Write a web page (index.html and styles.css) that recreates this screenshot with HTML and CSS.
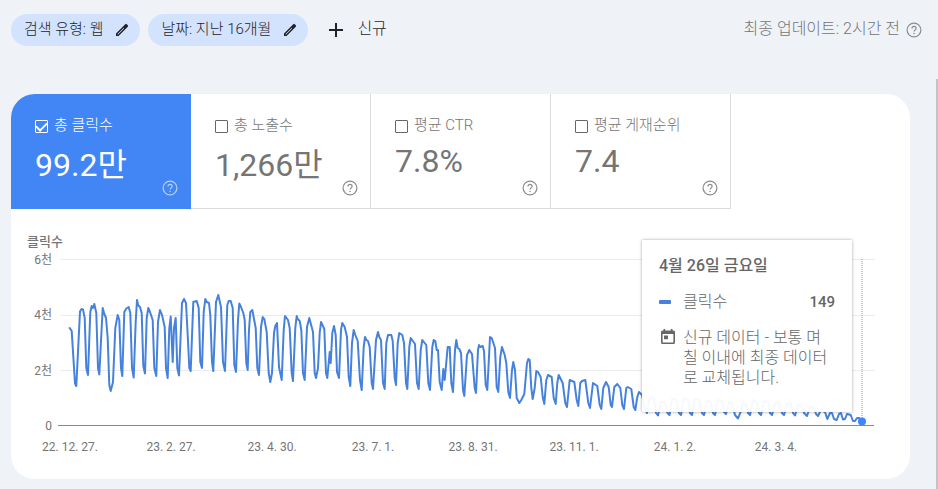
FILE: index.html
```html
<!DOCTYPE html>
<html lang="ko">
<head>
<meta charset="utf-8">
<meta name="viewport" content="width=device-width, initial-scale=1">
<title>실적</title>
<link rel="stylesheet" href="styles.css">
</head>
<body>
<svg class="defs" aria-hidden="true">
  <symbol id="pencil" viewBox="0 0 24 24"><path fill="currentColor" fill-rule="evenodd" d="M3 17.2V21h3.800L20.700 7.100a1.600 1.600 0 0 0 0-2.200l-1.600-1.600a1.600 1.600 0 0 0-2.200 0L3 17.200zM5.300 18.700v-.8l9-9 .8.800-9 9z"/></symbol>
  <symbol id="help" viewBox="0 0 16 16"><circle cx="8" cy="8" r="6.900" fill="none" stroke="currentColor" stroke-width="1.200"/><path d="M5.900 6.500C5.900 5.100 6.800 4.300 8 4.300s2.100.8 2.100 2c0 1.500-2 1.700-2 3.300" fill="none" stroke="currentColor" stroke-width="1.200"/><circle cx="8.050" cy="11.500" r=".8" fill="currentColor"/></symbol>
</svg>
<div class="page">
  <header class="filters">
    <button class="chip" type="button"><span class="text">검색 유형: 웹</span><svg class="pencil"><use href="#pencil"/></svg></button>
    <button class="chip" type="button"><span class="text">날짜: 지난 16개월</span><svg class="pencil"><use href="#pencil"/></svg></button>
    <button class="add" type="button"><svg class="plus" viewBox="0 0 14 14"><path d="M7 0v14M0 7h14" stroke="currentColor" stroke-width="2"/></svg><span class="text">신규</span></button>
    <div class="updated"><span class="text">최종 업데이트: 2시간 전</span><button class="help" type="button" aria-label="도움말"><svg><use href="#help"/></svg></button></div>
  </header>
  <main class="card">
    <section class="metrics">
      <div class="metric metric-on">
        <label class="metric-label"><input type="checkbox" checked><span class="text">총 클릭수</span></label>
        <div class="value value-unit">99.2만</div>
        <button class="help" type="button" aria-label="도움말"><svg><use href="#help"/></svg></button>
      </div>
      <div class="metric">
        <label class="metric-label"><input type="checkbox"><span class="text">총 노출수</span></label>
        <div class="value value-unit">1,266만</div>
        <button class="help" type="button" aria-label="도움말"><svg><use href="#help"/></svg></button>
      </div>
      <div class="metric">
        <label class="metric-label"><input type="checkbox"><span class="text">평균 CTR</span></label>
        <div class="value">7.8%</div>
        <button class="help" type="button" aria-label="도움말"><svg><use href="#help"/></svg></button>
      </div>
      <div class="metric">
        <label class="metric-label"><input type="checkbox"><span class="text">평균 게재순위</span></label>
        <div class="value">7.4</div>
        <button class="help" type="button" aria-label="도움말"><svg><use href="#help"/></svg></button>
      </div>
    </section>
    <section class="chart">
      <svg class="plot" viewBox="11 210 899 269" role="img" aria-label="클릭수">
        <g class="grid"><path d="M60 259.500H875M60 315.500H875M60 370.500H875"/></g>
        <path class="axis" d="M58 425.500H874"/>
        <text class="title" x="27" y="246">클릭수</text>
        <g class="ylabels"><text x="52" y="264">6천</text><text x="52" y="319">4천</text><text x="52" y="375">2천</text><text x="52" y="430">0</text></g>
        <g class="xlabels"><text x="70" y="451">22. 12. 27.</text><text x="171" y="451">23. 2. 27.</text><text x="272" y="451">23. 4. 30.</text><text x="373" y="451">23. 7. 1.</text><text x="473" y="451">23. 8. 31.</text><text x="574" y="451">23. 11. 1.</text><text x="675" y="451">24. 1. 2.</text><text x="776" y="451">24. 3. 4.</text></g>
        <path class="cursor" d="M862 259V421"/>
        <polyline class="line" points="69.700,328 71.700,331 75,383.500 76.300,386 80,311.500 81.500,309 83,309.500 84.700,318 86.300,368 88,375 90.300,312 91.700,306 93,308 94.300,304 96.300,313 98,368 99.300,374.500 102.700,308 104.300,314 106,318 107.700,338 109.300,385 110.700,391 113,382 115.300,328 117.700,315 119.300,320 121,368 122.300,376 124.300,312 126.300,308.500 128.700,307 130.300,313 132,368 133.700,377.500 135.700,322 137,300 138.300,305.500 140,307 141.700,313 143.300,366 145,373.500 146.700,318 148.300,308 150,312 152.700,320 154.300,368 156.300,376 158,322 160,310 162,315 164.700,327 166,368 167.700,378 169.300,328 170.700,316.500 172.700,362 174,328 175.700,318 177.300,368 179,375.500 182,303 184,299 186,303 187.700,335 189.300,368 190.700,371 193.300,302 196.700,301 198.700,308 200.300,362 202,368 203.700,312 205.300,299 206.700,302 209,303 210.300,315 212,362 213.300,371 216,302 218.300,295 221,307 223,362 225,371 227.300,305 228.700,301 230.700,301 232.700,308 234.300,365 236,372 238,320 239.300,303.500 241,307 243.300,313 244.700,320 246.300,363 247.700,370 249,330 250.300,312 252.300,310 255.700,328 257.300,368 259,375 261,327 262.700,317 264.300,319 266.700,332 268.700,373 270.300,382 272,373 274,333 275.300,326 277,323 279,367 281.700,380 283.700,330 285,316 288,320 289.700,328 291.700,373 293,381 295.300,328 296.700,316 297.700,319 299.700,321 301.300,330 303,373 304.700,380 307,327 309.300,318 313,332 314.700,373 316,378 318,368 319.700,333 321,322 324.300,329 326,373 327.300,378 329.700,352 330.700,363 332.300,333 334,326 335.700,335 337,372 339,378 341,330 342.300,323 344.700,327 347,337 348.700,377 350.300,386 352,343 353.700,330 355.300,335 357.700,341 360,380 361.700,390 363.700,347 365,337 366.300,340 368,341 369.700,347 371.700,383 373,389 376,340 378,332 379.300,337 381,340 383,383 384.700,389 386.300,343 388,335 391.300,335 392.700,341 394.700,378 396,385 397.700,343 399.300,333 402.300,335 404,343 406,383 407.300,389 409.300,347 410.700,338 415,344 417,383 418.700,389 420.700,350 422.300,340 426.300,345 428.300,383 430,390 432.300,347 433.700,340 435.300,341 436.700,350 438,350 439.700,382 441.700,390 443.300,369 444.700,380 447.700,347 449.700,347 451.300,383 453,392 455,350 456.300,340 457.700,348 459.300,349 461,353 463,390 464.300,396 467,355 469.300,350 472,354 474.700,388 476,393 478,350 479,345 480.300,347 482.700,346 484,351 485.700,385 487.300,390 490,337 491.700,338 495,348 496.700,387 498.300,392 500.300,357 502,347 504.700,355 506.300,363 508.300,392 510,398 512,370 513.300,362 515,370 516.700,398 519.300,403 521.300,400 524.300,394 527,363 528.300,359 529.700,360 531.300,388 532.700,399 534.700,388 536.300,371 538,372 540.700,377 542.700,397 544.300,404 546.300,380 548,375 551.700,377 553.700,398 555.700,404 557.300,383 558.700,375 562.700,383 565.300,403 567,407 569.700,380 574.300,382 576.700,400 578.300,406 580.300,383 582,381 585.300,380 588.300,403 590,408 593,383 597.300,386 599.700,405 601.300,409 603.300,388 606,382 608.700,387 610.700,405 612,407 614.300,387 617.300,384 620.300,388 622.300,405 624,409 626.300,388 627.700,387 631.300,389 633.700,407 635.300,410 637.300,397 639,392 642,395 645,409 647,413 649,400 651,397 654,399 656,413 658,415.500 661,402 665,402 667.500,413 669.500,415 672,399 676,399 679,413 681,415 684,399 688,400 690,413 692,415 695,399 699,400 702,413 704,415 707,401 711,402 713,413 715,415 718,400 722,401 724,412 726,414 729,402 732,403 735,415 738,418.500 741,411 743,402 746,404 748,413 750,415 753,400 757,402 759,413 761,415 764,401 768,402 770,413 772,415 775,403 779,403 782,413 784,415 787,403 791,404 793,413 795,415.500 798,405 802,406 804,413 807,416 810,407 814,408 816,414 818,416 821,410 825,412 827.300,419 830,413 832,413 834,419 836.700,420 839,414 841,413 843,419.500 845,419 847,414 850.700,415 853,421 855,421 857,418 859,418 862,421.500"/>
        <circle class="dot" cx="862" cy="421.500" r="4"/>
      </svg>
      <div class="tooltip" role="tooltip">
        <div class="tip-date">4월 26일 금요일</div>
        <div class="tip-row"><span class="tip-key"></span><span>클릭수</span><b>149</b></div>
        <div class="tip-note"><svg class="calendar" viewBox="0 0 14 15"><path fill="currentColor" fill-rule="evenodd" d="M2.500 0h1.700v1.500h5.600V0h1.700v1.500h1A1.500 1.500 0 0 1 14 3v10.500a1.500 1.500 0 0 1-1.500 1.500h-11A1.500 1.500 0 0 1 0 13.500V3a1.500 1.500 0 0 1 1.500-1.500h1zM1.600 5v8.400h10.800V5zM3 6.500h4v3.800H3z"/></svg><p>신규 데이터 - 보통 며칠 이내에 최종 데이터로 교체됩니다.</p></div>
      </div>
    </section>
  </main>
</div>
<div class="scroll-edge"></div>
</body>
</html>
```
FILE: styles.css
```css
* { box-sizing: border-box; }
body {
  margin: 0;
  min-height: 100vh;
  display: flex;
  background: #eff3f8;
  color: #757575;
  font-family: Roboto, "Noto Sans CJK KR", sans-serif;
  font-size: 16px;
  font-weight: 300;
}
button { border: 0; padding: 0; background: none; color: inherit; font: inherit; }
.defs { position: absolute; width: 0; height: 0; }
.page { flex: 1; min-width: 0; padding: 14px 26px 10px 11px; }
.scroll-edge { width: 2px; margin-top: 79px; background: #c1c3c6; }
.text { padding-bottom: 3px; line-height: 20px; white-space: nowrap; }
.filters { display: flex; align-items: center; gap: 8px; height: 32px; margin-bottom: 48px; color: #1f2329; }
.chip {
  display: flex;
  align-items: center;
  gap: 11px;
  height: 32px;
  padding: 0 10px 0 13px;
  border-radius: 16px;
  background: #d3e3fd;
  font-size: 15px;
}
.pencil { width: 16px; height: 16px; }
.add { display: flex; align-items: center; gap: 14px; margin-left: 13px; }
.plus { width: 14px; height: 14px; }
.updated { display: flex; align-items: center; gap: 6px; margin-left: auto; margin-right: -12px; color: #757575; }
.help { display: block; width: 16px; height: 16px; color: #8c8c8c; }
.help svg { display: block; width: 100%; height: 100%; }
.card { border-radius: 24px; background: #fff; overflow: hidden; }
.metrics { display: flex; height: 115px; }
.metric {
  position: relative;
  width: 180px;
  padding: 20px 0 0 24px;
  border-right: 1px solid #dadce0;
  border-bottom: 1px solid #dadce0;
}
.metric-on { background: #4285f4; border-color: #4285f4; color: #fff; }
.metric-label { display: flex; align-items: center; gap: 6px; height: 24px; font-size: 15px; }
.metric-label input {
  appearance: none;
  width: 13px;
  height: 13px;
  margin: 1px 0 0;
  border: 1px solid #666;
  border-radius: 1px;
}
.metric-on input { display: grid; place-items: center; border-color: #fff; }
.metric-on input::before {
  content: "";
  width: 9px;
  height: 5px;
  border: solid #fff;
  border-width: 0 0 2px 2px;
  transform: translateY(-1px) rotate(-45deg);
}
.value { height: 40px; margin-top: 3px; font-size: 32px; line-height: 40px; font-weight: 400; }
.value-unit { margin-top: 7px; }
.metric .help { position: absolute; right: 12px; bottom: 12px; }
.metric-on .help { color: #b8d1fb; }
.chart { position: relative; padding-top: 1px; }
.plot { display: block; width: 100%; height: auto; fill: #757575; font-size: 12px; font-weight: 400; }
.title { font-size: 13px; font-weight: 500; }
.ylabels { text-anchor: end; }
.xlabels { text-anchor: middle; }
.grid { stroke: #ebebeb; }
.axis { stroke: #8a8a8a; }
.cursor { stroke: #999; stroke-dasharray: 1 1; }
.line { fill: none; stroke: #4682dc; stroke-width: 2; stroke-linejoin: round; stroke-linecap: round; }
.dot { fill: #4285f4; }
.tooltip {
  position: absolute;
  top: 31px;
  right: 58px;
  width: 210px;
  padding: 14px 17px 24px;
  background: rgba(255, 255, 255, 0.95);
  box-shadow: 0 0 3px rgba(0, 0, 0, 0.35);
  color: #666;
}
.tip-date { height: 24px; line-height: 24px; font-weight: 500; }
.tip-row { display: flex; align-items: center; height: 24px; margin-top: 12px; line-height: 24px; }
.tip-row b { margin-left: auto; font-size: 15px; font-weight: 500; }
.tip-key { width: 12px; height: 4px; margin-right: 12px; border-radius: 1px; background: #4682dc; }
.tip-note { display: flex; gap: 8px; margin-top: 14px; line-height: 20px; }
.tip-note p { margin: 0; word-break: break-all; }
.calendar { flex: none; width: 14px; height: 15px; margin: 1px 0 0 2px; }
```
